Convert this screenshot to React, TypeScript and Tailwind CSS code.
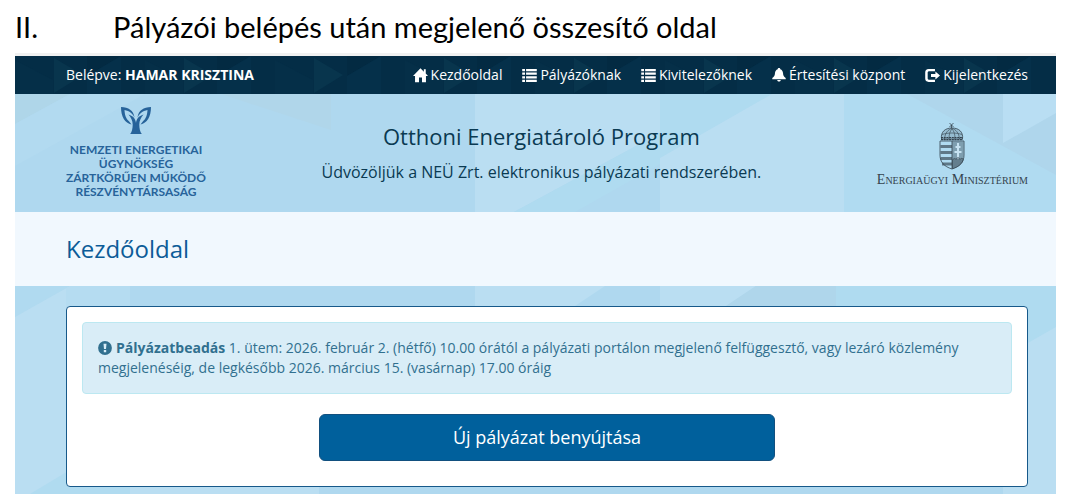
import type { ReactNode } from "react";

function Icon({ children, size = 15 }: { children: ReactNode; size?: number }) {
  return (
    <svg
      width={size}
      height={size}
      viewBox="0 0 14 14"
      fill="currentColor"
      aria-hidden="true"
      className="shrink-0"
    >
      {children}
    </svg>
  );
}

const homeIcon = (
  <Icon>
    <path d="M7 .2 0 7.400h1.900V13.400h3.700V8.800h2.800v4.600h3.700V7.400H14L11.900 5.200V1.200h-1.800v2.200z" />
  </Icon>
);

const listIcon = (
  <Icon>
    <path d="M.2 1h2.600v2.100H.2zM3.800 1h10v2.100h-10zM.2 4.300h2.600v2.100H.2zM3.800 4.300h10v2.100h-10zM.2 7.600h2.600v2.100H.2zM3.800 7.600h10v2.100h-10zM.2 10.900h2.600V13H.2zM3.800 10.900h10V13h-10z" />
  </Icon>
);

const bellIcon = (
  <Icon size={14}>
    <path d="M7 0c.8 0 1.300.5 1.300 1.200C10 1.800 10.800 3.100 11 5c.2 2.600.8 3.800 2.700 5v1.200H.3V10C2.200 8.800 2.800 7.600 3 5c.2-1.900 1-3.200 2.700-3.800C5.700.5 6.200 0 7 0zM5.200 12h3.600c-.2 1-.9 1.600-1.800 1.600S5.400 13 5.200 12z" />
  </Icon>
);

const logoutIcon = (
  <Icon>
    <path d="M9.300 1v2.100H4C3 3.100 2.500 3.600 2.500 4.500v5c0 .9.5 1.400 1.500 1.400h5.300V13H3.400C1.300 13 .2 11.800.2 9.900V4.100C.2 2.200 1.300 1 3.400 1z" />
    <path d="M9.700 3.300 14 7l-4.300 3.700V8.300H5.600V5.700h4.100z" />
  </Icon>
);

const navItems = [
  { label: "Kezdőoldal", icon: homeIcon },
  { label: "Pályázóknak", icon: listIcon },
  { label: "Kivitelezőknek", icon: listIcon },
  { label: "Értesítési központ", icon: bellIcon },
  { label: "Kijelentkezés", icon: logoutIcon },
];

function TopPattern() {
  return (
    <svg
      className="absolute inset-0 h-full w-full"
      viewBox="0 0 1041 38"
      preserveAspectRatio="none"
      aria-hidden="true"
    >
      <rect width="1041" height="38" fill="#042d46" />
      {[0, 130, 260, 390, 520, 650, 780, 910].map((x) => (
        <g key={x} transform={`translate(${x} 0)`}>
          <path d="M0 4 38 24V38H0z" fill="#052f48" />
          <path d="M39 2 68 19 39 37z" fill="#08354d" />
          <path d="M72 0h34L72 20z" fill="#032a42" />
          <path d="M72 20 106 0v38H72z" fill="#05304a" />
        </g>
      ))}
    </svg>
  );
}

function PagePattern() {
  return (
    <svg
      className="absolute inset-0 h-full w-full"
      viewBox="0 0 1041 400"
      preserveAspectRatio="none"
      aria-hidden="true"
    >
      <rect width="1041" height="400" fill="#afd8ef" />
      {/* header strip */}
      <path d="M0 0h55L0 30z" fill="#afd6e9" />
      <path d="M55 0h75L0 72V30z" fill="#b2daf0" />
      <path d="M206 0h110v36z" fill="#b0d6ea" />
      <path d="M460 0h185v39L499 118h-39z" fill="#badef2" />
      <path d="M645 39v31l-85 48h-61z" fill="#afdbf0" />
      <path d="M645 0h112L645 64z" fill="#afdbf0" />
      <path d="M757 0h72v118H645V64z" fill="#badef2" />
      <path d="M829 0h212v118H829z" fill="#b0dbf1" />
      <path d="M892 0h149v81z" fill="#afd6ec" />
      <path d="M988 0h53v19l-53 30z" fill="#b9def3" />
      {/* body */}
      <path d="M0 192h55L0 223z" fill="#b0daf0" />
      <path d="M0 223 55 192h60v208H0z" fill="#badef2" />
      <path d="M55 192h60v40H51v-38z" fill="#b5dcf1" />
      <path d="M15 400 60 373h55v27z" fill="#b0dbf0" />
      <path d="M115 384h189v16H115z" fill="#badef2" />
      <path d="M460 192h130l-45 30h-85z" fill="#badef2" />
      <path d="M645 192h96l-45 30h-51z" fill="#badef2" />
      <path d="M741 192h80v30H696z" fill="#afd6eb" />
      <path d="M821 192h220v54l-60 24h-160z" fill="#afdbf0" />
      <path d="M1041 233v167h-53V263z" fill="#badef2" />
    </svg>
  );
}

function AgencyLogo() {
  return (
    <div className="flex flex-col items-center text-[#27639a]">
      <svg width="30" height="28" viewBox="0 0 30 28" fill="currentColor" aria-hidden="true">
        {/* leaves, hollow inside with the outer edge kept thick */}
        <path
          fillRule="evenodd"
          d="M0 0c7.500.5 12.500 3 13.500 10.500-1.500-3-4-5.500-6.500-6.500L3.500 3c.3 5 1.300 8.500 4.700 11.500l2.300 3C4 16 0 10 0 0z"
        />
        <path
          fillRule="evenodd"
          d="M30 0c-7.500.5-12.500 3-13.500 10.500 1.500-3 4-5.500 6.500-6.500l3.500-1c-.3 5-1.300 8.500-4.700 11.500l-2.300 3C26 16 30 10 30 0z"
        />
        <path d="M7.500 7.500c5 1.500 7 4.500 7.500 8.500.5-4 2.500-7 7.500-8.500-2.500 3-4.200 6-4.200 10 0 4 .8 7.300 2.500 9.500h-11.600c1.700-2.200 2.500-5.500 2.500-9.500 0-4-1.700-7-4.200-10z" />
      </svg>
      <p className="mt-2 text-center font-['Lato',sans-serif] text-xs leading-[14px] font-bold">
        NEMZETI ENERGETIKAI
        <br />
        ÜGYNÖKSÉG
        <br />
        ZÁRTKÖRŰEN MŰKÖDŐ
        <br />
        RÉSZVÉNYTÁRSASÁG
      </p>
    </div>
  );
}

function MinistryLogo() {
  return (
    <div className="flex flex-col items-center pt-1 text-[#34434e]">
      <svg
        width="26"
        height="48"
        viewBox="0 0 26 48"
        fill="none"
        stroke="currentColor"
        aria-hidden="true"
      >
        {/* crown */}
        <path d="M10.500 1l4 4m0-4-4 4M12.500 3v3" strokeWidth=".8" />
        <path d="M2.500 17C1.500 10 6 6 13 6s11.500 4 10.500 11z" fill="currentColor" fillOpacity=".2" strokeWidth=".8" />
        <path d="M5.500 17C6 11 9 7.500 13 6.500c4 1 7 4.500 7.500 10.500M10 17c0-5 1-8 3-10 2 2 3 5 3 10M3 12.500c6-2 14-2 20 0" strokeWidth=".6" />
        <path d="M2 15.500h22M2 17.700h22" strokeWidth="1.200" strokeDasharray="2 .7" />
        {/* shield */}
        <path d="M1 19h24v14c0 7-4 11.500-12 14C5 44.500 1 40 1 33z" strokeWidth=".8" />
        <path d="M13 19v28" strokeWidth=".8" />
        <path d="M1.500 24.500H13M1.500 30.500H13M1.500 36.500H13M3 42h10" strokeWidth="3" strokeOpacity=".65" />
        <path d="M13 19.500h11.500V34c0 6-4 10-11.500 12z" fill="currentColor" fillOpacity=".4" stroke="none" />
        <path d="M19 21v16M16.500 25h5M15.500 30h7" stroke="#c6e2f1" strokeWidth="2" />
        <path d="M13.500 38c1-2 3-2 3.500-.5.500-2.500 3.500-2.500 4 0 .8-1.500 2.500-1.500 3.300-.2C23.500 41.500 20 44.500 13.500 46.500z" fill="currentColor" fillOpacity=".35" strokeWidth=".6" />
      </svg>
      <p className="mt-[2px] font-['Liberation_Serif',serif] text-sm leading-4 [font-variant:small-caps]">
        Energiaügyi Minisztérium
      </p>
    </div>
  );
}

export default function App() {
  return (
    <div className="bg-white pr-[10px] pb-2 pl-[15px] font-['Open_Sans',sans-serif]">
      <h1 className="flex h-[53px] items-center gap-[75px] font-['Lato',sans-serif] text-[29px] leading-8 text-black">
        <span>II.</span>
        <span>Pályázói belépés után megjelenő összesítő oldal</span>
      </h1>

      <div className="border-t-3 border-[#f1f1f1]">
        <div className="relative">
          <TopPattern />
          <div className="relative flex h-[38px] items-center justify-between pr-7 pl-[51px] text-sm text-white">
            <p>
              Belépve: <strong>HAMAR KRISZTINA</strong>
            </p>
            <nav className="flex gap-5">
              {navItems.map((item) => (
                <a
                  key={item.label}
                  href="#"
                  className="flex items-center gap-[3px] whitespace-nowrap hover:underline"
                >
                  {item.icon}
                  {item.label}
                </a>
              ))}
            </nav>
          </div>
        </div>

        <div className="relative">
          <PagePattern />
          <div className="relative">
            <header className="flex h-[118px] items-center justify-between pr-7 pl-[51px]">
              <AgencyLogo />
              <div className="pb-[2px] text-center text-[#0a3a52]">
                <h2 className="text-[22px] leading-8">Otthoni Energiatároló Program</h2>
                <p className="mt-2 text-base leading-6">
                  Üdvözöljük a NEÜ Zrt. elektronikus pályázati rendszerében.
                </p>
              </div>
              <MinistryLogo />
            </header>

            <div className="bg-[#f1f8fe] py-5 pr-7 pl-[51px]">
              <h3 className="text-2xl leading-[34px] text-[#0c5c98]">Kezdőoldal</h3>
            </div>

            <main className="pt-5 pr-7 pb-[7px] pl-[51px]">
              <section className="rounded border border-[#17598a] bg-white px-[15px] pt-[15px] pb-[25px]">
                <div className="rounded border border-[#bce8f1] bg-[#d9edf7] p-[15px] text-sm leading-5 text-[#31708f]">
                  <svg
                    width="14"
                    height="14"
                    viewBox="0 0 14 14"
                    fill="currentColor"
                    aria-hidden="true"
                    className="mr-1 inline-block align-[-2px]"
                  >
                    <circle cx="7" cy="7" r="6.900" />
                    <path d="M5.500 2.700h3L8 8H6zM5.800 9h2.400v2.300H5.800z" fill="#d9edf7" />
                  </svg>
                  <strong>Pályázatbeadás</strong> 1. ütem: 2026. február 2. (hétfő) 10.00 órától a
                  pályázati portálon megjelenő felfüggesztő, vagy lezáró közlemény megjelenéséig, de
                  legkésőbb 2026. március 15. (vasárnap) 17.00 óráig
                </div>
                <button
                  type="button"
                  className="mx-auto mt-5 block w-[49%] rounded-md border border-[#12507f] bg-[#00609c] py-[10px] text-lg leading-[25px] text-white hover:bg-[#00507f]"
                >
                  Új pályázat benyújtása
                </button>
              </section>
            </main>
          </div>
        </div>
      </div>
    </div>
  );
}
